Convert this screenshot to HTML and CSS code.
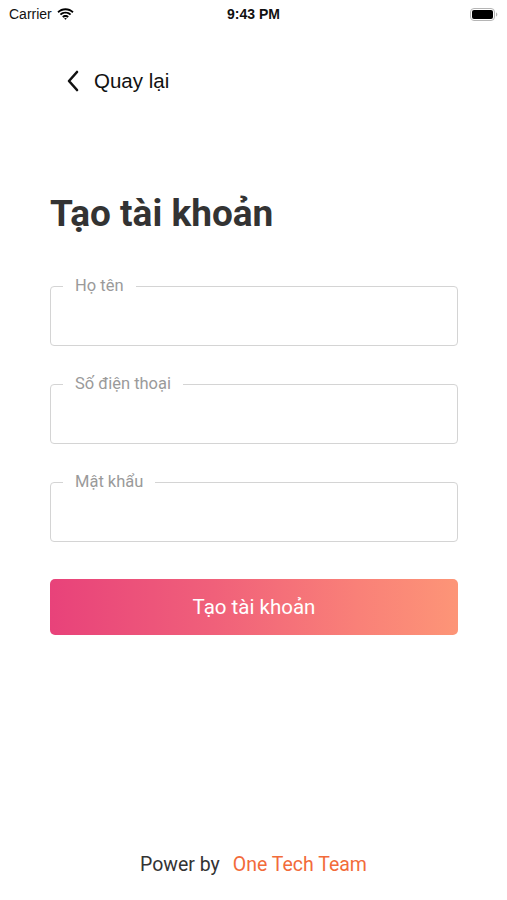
FILE: index.html
```html
<!DOCTYPE html>
<html lang="vi">
<head>
<meta charset="utf-8">
<link rel="stylesheet" href="styles.css">
</head>
<body>
<div class="screen">
  <div class="status">
    <div class="status-left">
      <span class="carrier">Carrier</span>
      <svg class="wifi" width="17" height="12" viewBox="0 0 17 12"><path d="M8.5 2.2c2.6 0 5 1 6.8 2.7l1.3-1.3C14.4 1.5 11.6.3 8.5.3S2.6 1.5.4 3.6l1.3 1.3C3.5 3.2 5.9 2.2 8.5 2.2z" fill="#000"/><path d="M8.5 5.6c1.7 0 3.2.6 4.4 1.7l1.3-1.3C12.7 4.6 10.7 3.7 8.5 3.7S4.3 4.6 2.8 6l1.3 1.3c1.2-1.1 2.7-1.7 4.4-1.7z" fill="#000"/><path d="M8.5 8.9c.8 0 1.5.3 2 .8l1.3-1.3c-.9-.8-2-1.3-3.3-1.3s-2.4.5-3.3 1.3l1.3 1.3c.5-.5 1.2-.8 2-.8z" fill="#000"/><path d="M8.5 11.8l1.4-1.4c-.4-.3-.9-.5-1.4-.5s-1 .2-1.4.5z" fill="#000"/></svg>
    </div>
    <div class="time">9:43 PM</div>
    <div class="status-right">
      <svg width="28" height="13" viewBox="0 0 28 13"><rect x="0.5" y="0.5" width="24" height="12" rx="3.5" fill="none" stroke="#b5b5b5"/><rect x="2" y="2" width="21" height="9" rx="2" fill="#000"/><path d="M26 4.5v4c.8-.3 1.3-1.1 1.3-2s-.5-1.7-1.3-2z" fill="#b5b5b5"/></svg>
    </div>
  </div>

  <div class="nav">
    <svg class="back" width="14" height="22" viewBox="0 0 14 22"><path d="M11 2 L3 11 L11 20" fill="none" stroke="#111" stroke-width="2.6" stroke-linecap="round" stroke-linejoin="round"/></svg>
    <span class="back-text">Quay lại</span>
  </div>

  <main class="content">
    <h1 class="title">Tạo tài khoản</h1>
    <form class="form">
      <fieldset class="field">
        <legend>Họ tên</legend>
        <input class="input" type="text">
      </fieldset>
      <fieldset class="field">
        <legend>Số điện thoại</legend>
        <input class="input" type="tel">
      </fieldset>
      <fieldset class="field">
        <legend>Mật khẩu</legend>
        <input class="input" type="password">
      </fieldset>
      <button class="submit" type="button">Tạo tài khoản</button>
    </form>
  </main>

  <footer class="footer">
    <span class="power">Power by</span>
    <span class="brand">One Tech Team</span>
  </footer>
</div>
</body>
</html>
```

FILE: styles.css
```css
* { box-sizing: border-box; }
html, body { margin: 0; padding: 0; background: #fff; }
body { font-family: Roboto, "Noto Sans", sans-serif; color: #222; }
.screen { width: 507px; height: 900px; display: flex; flex-direction: column; }

.status { height: 28px; display: flex; align-items: center; justify-content: space-between; padding: 0 9px 0 9px; font-family: "Liberation Sans", Arial, sans-serif; font-size: 14px; color: #111; }
.status-left { display: flex; align-items: center; gap: 5px; width: 120px; }
.time { font-weight: bold; font-size: 14px; }
.status-right { width: 120px; display: flex; justify-content: flex-end; }

.nav { display: flex; align-items: center; padding: 42px 0 0 66px; height: 64px; }
.back { margin-right: 14px; }
.back-text { font-size: 20.5px; color: #111; font-family: "Liberation Sans", Arial, sans-serif; }

.content { padding: 0 49px 0 50px; }
.title { margin: 100px 0 0; font-size: 37px; font-weight: 700; color: #333; line-height: 44px; }

.form { margin-top: 40px; display: flex; flex-direction: column; gap: 28px; }
.field { margin: 0; padding: 0 12px; border: 1px solid #d4d4d4; border-radius: 4px; min-width: 0; }
.field legend { padding: 0 12px; font-size: 16.5px; line-height: 20px; color: #9a9a9a; }
.input { display: block; width: 100%; height: 49px; border: 0; outline: none; background: transparent; font-size: 16px; font-family: inherit; }

.submit { margin-top: 9px; height: 56px; border: 0; border-radius: 5px; background: linear-gradient(90deg, #e8427a 0%, #f0607a 40%, #f98078 75%, #fd9577 100%); color: #fff; font-size: 20.5px; font-weight: 400; font-family: Roboto, sans-serif; }

.footer { margin-top: auto; margin-bottom: 24px; display: flex; justify-content: center; gap: 13px; font-size: 19.5px; }
.power { color: #333; }
.brand { color: #f26b3a; }
```
